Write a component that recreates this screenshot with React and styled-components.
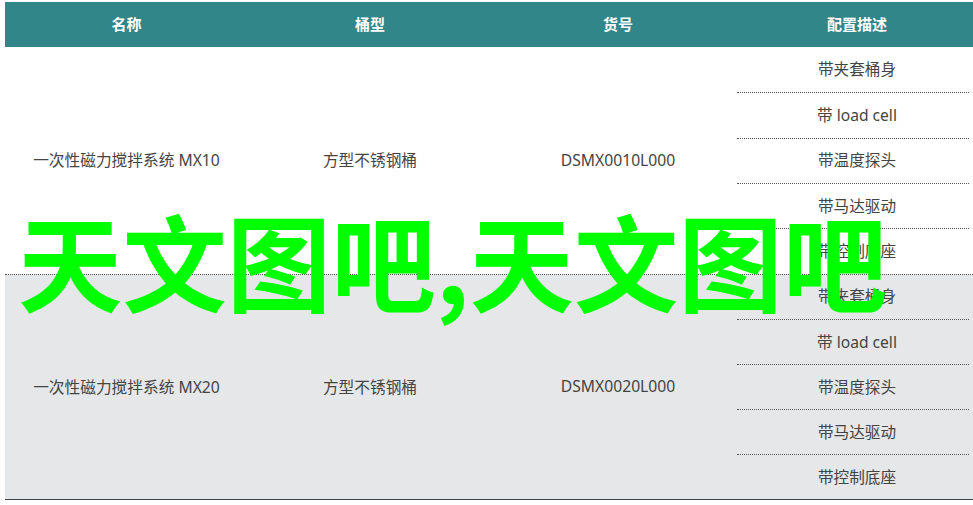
import React from 'react'
import styled, { createGlobalStyle } from 'styled-components'

const GlobalStyle = createGlobalStyle`
  html, body {
    margin: 0;
    background: #fff;
  }
  body {
    font-family: "Noto Sans", "Noto Sans CJK SC", sans-serif;
  }
`

const COLUMNS = '243px 244px 245px 232px'

const Page = styled.div`
  position: relative;
  width: 973px;
  height: 505px;
  padding: 2px 0 0 5px;
  box-sizing: border-box;
  overflow: hidden;
`

const Head = styled.div`
  display: grid;
  grid-template-columns: ${COLUMNS};
  height: 45px;
  background: #31868a;
`

const HeadCell = styled.div`
  display: flex;
  align-items: center;
  justify-content: center;
  padding-left: ${(p) => p.$inset || 0}px;
  padding-bottom: 3px;
  color: #fff;
  font-size: 15px;
  font-weight: 700;
`

const Row = styled.div`
  display: grid;
  grid-template-columns: ${COLUMNS};
  height: 226.5px;
  box-sizing: border-box;
  background: ${(p) => (p.$shaded ? '#e5e7e9' : '#fff')};
  border-top: ${(p) => (p.$shaded ? '1px dotted #555' : 'none')};
  border-bottom: ${(p) => (p.$last ? '1px solid #444' : 'none')};
`

const Cell = styled.div`
  display: flex;
  align-items: center;
  justify-content: center;
  padding-left: ${(p) => p.$inset || 0}px;
  padding-bottom: 1px;
  color: #444;
  font-size: 15.7px;
`

const Specs = styled.div`
  display: grid;
  grid-auto-rows: 1fr;
`

const Spec = styled.div`
  display: flex;
  align-items: center;
  justify-content: center;
  padding: 0 0 2px 8px;
  color: #444;
  font-size: 15.6px;
  border-top: ${(p) => (p.$first ? 'none' : '1px dotted #555')};
`

const Watermark = styled.div`
  position: absolute;
  left: 18px;
  top: 184px;
  color: #00ff00;
  font-family: "Noto Sans CJK SC", sans-serif;
  font-size: 104.4px;
  font-weight: 700;
  line-height: 150px;
  white-space: nowrap;
`

const specs = ['带夹套桶身', '带 load cell', '带温度探头', '带马达驱动', '带控制底座']

const products = [
  { name: '一次性磁力搅拌系统 MX10', type: '方型不锈钢桶', code: 'DSMX0010L000' },
  { name: '一次性磁力搅拌系统 MX20', type: '方型不锈钢桶', code: 'DSMX0020L000' },
]

const App = () => (
  <Page>
    <GlobalStyle />
    <Head>
      <HeadCell>名称</HeadCell>
      <HeadCell>桶型</HeadCell>
      <HeadCell $inset={7}>货号</HeadCell>
      <HeadCell $inset={8}>配置描述</HeadCell>
    </Head>
    {products.map((item, i) => (
      <Row key={item.code} $shaded={i === 1} $last={i === 1}>
        <Cell>{item.name}</Cell>
        <Cell>{item.type}</Cell>
        <Cell $inset={7}>{item.code}</Cell>
        <Specs>
          {specs.map((spec, j) => (
            <Spec key={spec} $first={j === 0}>{spec}</Spec>
          ))}
        </Specs>
      </Row>
    ))}
    <Watermark>天文图吧,天文图吧</Watermark>
  </Page>
)

export default App
